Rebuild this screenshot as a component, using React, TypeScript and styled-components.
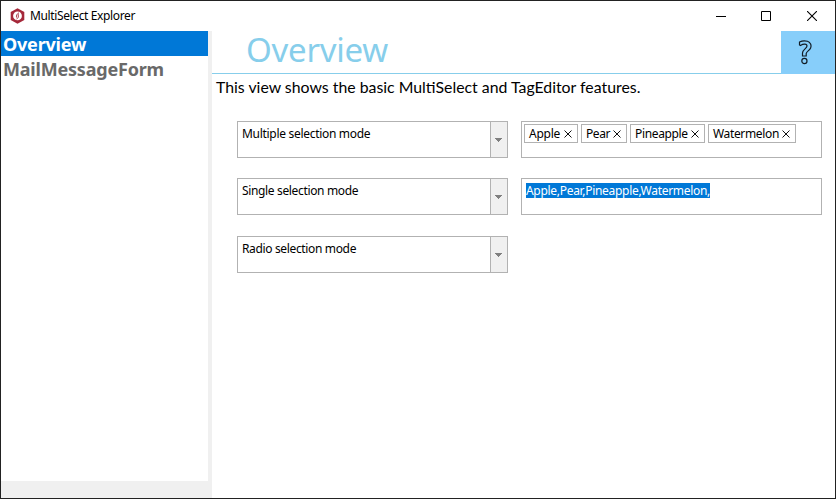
import React from 'react';
import styled, { createGlobalStyle } from 'styled-components';

const GlobalStyle = createGlobalStyle`
  * { box-sizing: border-box; }
  body { margin: 0; overflow: hidden; font-family: "Noto Sans", "Open Sans", sans-serif; color: #000; }
`;

const Window = styled.div`
  width: 836px;
  height: 499px;
  border: 1px solid #222;
  background: #fff;
  display: flex;
  flex-direction: column;
`;

const TitleBar = styled.header`
  height: 30px;
  flex: none;
  display: flex;
  align-items: center;
  padding-left: 9px;
`;

const Title = styled.span`
  margin-left: 5px;
  flex: 1;
  font-size: 12px;
  line-height: 16px;
  letter-spacing: -0.37px;
`;

const CaptionButton = styled.div`
  width: 46px;
  height: 30px;
  display: flex;
  align-items: center;
  justify-content: center;
  &:nth-last-child(2) { width: 44px; }
  &:last-child { width: 47px; }
`;

const Body = styled.div`
  flex: 1;
  display: flex;
  min-height: 0;
`;

const Sidebar = styled.nav`
  width: 211px;
  flex: none;
  background: #f0f0f0;
  padding: 0 4px 17px 0;
  display: flex;
`;

const NavList = styled.div`
  flex: 1;
  background: #fff;
`;

const NavItem = styled.div<{ $active?: boolean }>`
  height: 25px;
  padding-left: 2px;
  font-size: 18px;
  font-weight: 700;
  line-height: 26px;
  white-space: nowrap;
  letter-spacing: -0.2px;
  color: ${(p) => (p.$active ? '#fff' : '#696969')};
  background: ${(p) => (p.$active ? '#0078d7' : 'transparent')};
`;

const Main = styled.main`
  flex: 1;
  min-width: 0;
`;

const Heading = styled.div`
  height: 43px;
  display: flex;
  justify-content: space-between;
  border-bottom: 1px solid #87ceeb;
`;

const PageTitle = styled.h1`
  margin: 0 0 0 34px;
  font-size: 33px;
  font-weight: 400;
  line-height: 38px;
  letter-spacing: -0.25px;
  color: #87ceeb;
`;

const HelpButton = styled.div`
  width: 54px;
  height: 43px;
  background: #87cefa;
  display: flex;
  justify-content: center;
  padding: 9px 6px 0 0;
`;

const Description = styled.p`
  margin: 2px 0 0 4px;
  height: 22px;
  font-family: Lato, sans-serif;
  font-size: 15.85px;
  line-height: 22px;
  white-space: nowrap;
`;

const Fields = styled.div`
  margin: 23px 0 0 25px;
  display: grid;
  grid-template-columns: 271px 301px;
  grid-template-rows: 57px 58px 37px;
  column-gap: 13px;
  align-items: start;
`;

const Field = styled.div`
  height: 37px;
  border: 1px solid #b2b2b2;
  background: #fff;
  display: flex;
  align-items: flex-start;
  font-size: 12px;
  line-height: 16px;
  white-space: nowrap;
`;

const FieldLabel = styled.span<{ $spacing: number }>`
  flex: 1;
  padding: 4px 0 0 4px;
  letter-spacing: ${(p) => p.$spacing}px;
`;

const DropButton = styled.div`
  width: 17px;
  height: 35px;
  border-left: 1px solid #b2b2b2;
  background: #f0f0f0;
  display: flex;
  align-items: flex-start;
  padding: 16px 0 0 4px;
`;

const TagField = styled(Field)`
  padding: 2px;
  gap: 3px;
`;

const Tag = styled.div<{ $width: number; $spacing: number }>`
  width: ${(p) => p.$width}px;
  height: 19px;
  border: 1px solid #b2b2b2;
  padding: 1px 5px 0 4px;
  display: flex;
  justify-content: space-between;
  letter-spacing: ${(p) => p.$spacing}px;
  svg { flex: none; margin-top: 4px; }
`;

const Selection = styled.span`
  margin: 4px 0 0 4px;
  width: 184px;
  height: 15px;
  line-height: 16px;
  background: #0078d7;
  color: #fff;
  letter-spacing: -0.3px;
`;

const modes = [
  { label: 'Multiple selection mode', spacing: -0.3 },
  { label: 'Single selection mode', spacing: -0.35 },
  { label: 'Radio selection mode', spacing: -0.35 },
];

const tags = [
  { label: 'Apple', width: 54, spacing: -0.25 },
  { label: 'Pear', width: 46, spacing: -0.4 },
  { label: 'Pineapple', width: 75, spacing: -0.35 },
  { label: 'Watermelon', width: 88, spacing: -0.35 },
];

const AppIcon = () => (
  <svg width="15" height="16" viewBox="0 0 15 16">
    <path d="M7.5 0.3 14.3 4v8L7.5 15.7 0.7 12V4z" fill="#a5283a" />
    <circle cx="7.5" cy="7.9" r="4.4" fill="#fff" />
    <path d="M9 4.800C6.800 5.800 6.200 7.500 6.500 9.500M8.300 6.200v3.300L6.500 11" fill="none" stroke="#a5283a" strokeWidth="0.9" />
  </svg>
);

const Caret = () => (
  <svg width="7" height="4" viewBox="0 0 7 4" shapeRendering="crispEdges">
    <path d="M0 0h7v1H6v1H5v1H4v1H3V3H2V2H1V1H0z" fill="#808080" />
  </svg>
);

const RemoveIcon = () => (
  <svg width="8" height="8" viewBox="0 0 8 8">
    <path d="M.5.5l7 7M7.5.5l-7 7" stroke="#111" strokeWidth="1" />
  </svg>
);

const HelpIcon = () => (
  <svg width="14" height="25" viewBox="0 0 14 25" fill="none" stroke="#111c25" strokeWidth="1.2">
    <path d="M1.500 2C4 .7 7 .5 9.500 1.300c3 1 4.200 3.900 3.100 6.700-1 2.500-4.200 3.500-4.400 5.500v2.500H4.500v-3c0-3.500 4.500-4.500 4.500-7C9 3.700 5.500 3.700 2.500 5.500L1.500 5z" />
    <circle cx="6.400" cy="21" r="2.600" />
  </svg>
);

const DropField = ({ label, spacing }: { label: string; spacing: number }) => (
  <Field>
    <FieldLabel $spacing={spacing}>{label}</FieldLabel>
    <DropButton><Caret /></DropButton>
  </Field>
);

export default function App() {
  return (
    <>
      <GlobalStyle />
      <Window>
        <TitleBar>
          <AppIcon />
          <Title>MultiSelect Explorer</Title>
          <CaptionButton>
            <svg width="10" height="1"><path d="M0 .5h10" stroke="#000" /></svg>
          </CaptionButton>
          <CaptionButton>
            <svg width="10" height="10"><path d="M.5.5h9v9h-9z" fill="none" stroke="#000" /></svg>
          </CaptionButton>
          <CaptionButton>
            <svg width="10" height="10"><path d="M0 0l10 10M10 0l-10 10" stroke="#000" strokeWidth="1.1" /></svg>
          </CaptionButton>
        </TitleBar>
        <Body>
          <Sidebar>
            <NavList>
              <NavItem $active>Overview</NavItem>
              <NavItem>MailMessageForm</NavItem>
            </NavList>
          </Sidebar>
          <Main>
            <Heading>
              <PageTitle>Overview</PageTitle>
              <HelpButton><HelpIcon /></HelpButton>
            </Heading>
            <Description>This view shows the basic MultiSelect and TagEditor features.</Description>
            <Fields>
              <DropField {...modes[0]} />
              <TagField>
                {tags.map((t) => (
                  <Tag key={t.label} $width={t.width} $spacing={t.spacing}>
                    {t.label}
                    <RemoveIcon />
                  </Tag>
                ))}
              </TagField>
              <DropField {...modes[1]} />
              <Field>
                <Selection>Apple,Pear,Pineapple,Watermelon,</Selection>
              </Field>
              <DropField {...modes[2]} />
            </Fields>
          </Main>
        </Body>
      </Window>
    </>
  );
}
